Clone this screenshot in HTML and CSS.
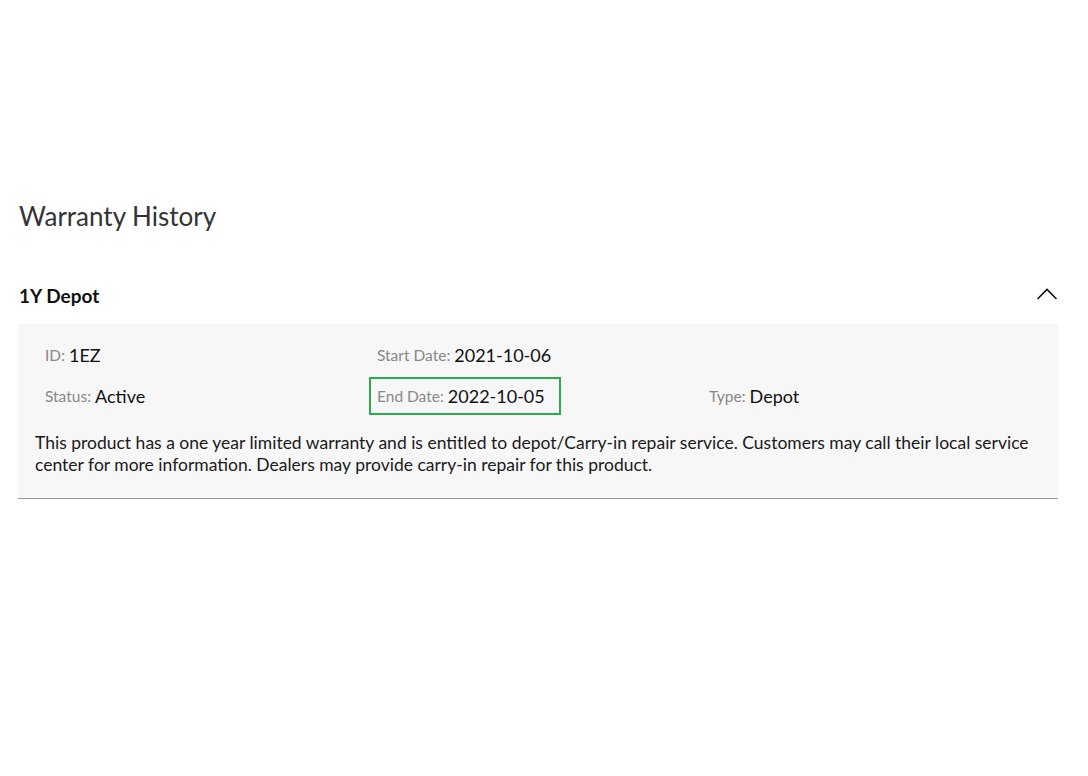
FILE: index.html
```html
<html>
	<head>
		<meta http-equiv="Content-Type" content="text/html; charset=utf-8">
		<title>
			Warranty History
		</title>
		<link rel="stylesheet" href="styles.css">
	</head>
	<body>
		<div class="container">
			<h1>Warranty History</h1>

			<div class="warranty_item">
				<div class="warranty_header">
					<h2>1Y Depot</h2>
					<svg class="chevron" width="22" height="14" viewBox="0 0 22 14">
						<polyline points="1.5,12 11,2.5 20.5,12" fill="none" stroke="#111" stroke-width="1.6"/>
					</svg>
				</div>

				<div class="warranty_body">
					<div class="field_grid">
						<div class="field"><span class="label">ID:</span> <span class="value">1EZ</span></div>
						<div class="field"><span class="label">Start Date:</span> <span class="value">2021-10-06</span></div>
						<div class="field">&nbsp;</div>

						<div class="field"><span class="label">Status:</span> <span class="value">Active</span></div>
						<div class="field highlight"><span class="label">End Date:</span> <span class="value">2022-10-05</span></div>
						<div class="field"><span class="label">Type:</span> <span class="value">Depot</span></div>
					</div>

					<p class="description">
						This product has a one year limited warranty and is entitled to depot/Carry-in repair service. Customers may call their local service center for more information. Dealers may provide carry-in repair for this product.
					</p>
				</div>
			</div>
		</div>
	</body>
</html>
```

FILE: styles.css
```css
*{
	margin:0;
	padding:0;
}

body{
	font-family:Lato, "Open Sans", sans-serif;
	background:#FFF;
	color:#111;
}

.container{
	padding:199px 30px 0 18px;
}

h1{
	font-size:26px;
	font-weight:normal;
	color:#333;
	line-height:34px;
	padding-left:1px;
}

.warranty_item{
	margin-top:35px;
}

.warranty_header{
	display:flex;
	align-items:center;
	justify-content:space-between;
	height:56px;
	padding:0 0 2px 1px;
	box-sizing:border-box;
}

h2{
	font-size:19px;
	font-weight:bold;
	color:#111;
}

.chevron{
	margin-top:-2px;
}

.warranty_body{
	background-color:#F7F7F7;
	border-bottom:1px solid #999;
	padding:12px 17px 22px 17px;
}

.field_grid{
	display:grid;
	grid-template-columns:332px 332px 332px;
	grid-auto-rows:38px;
	row-gap:3px;
}

.field{
	display:flex;
	align-items:center;
	padding:0 10px;
	white-space:nowrap;
}

.field .label{
	font-size:15.5px;
	color:#888;
}

.field .label + .value{
	margin-left:4px;
}

.field .value{
	font-size:18px;
	color:#111;
}

.highlight{
	border:2px solid #2EAA4F;
	margin-left:2px;
	padding-left:6px;
	width:192px;
	box-sizing:border-box;
}

.description{
	font-size:17.5px;
	line-height:22px;
	color:#1A1A1A;
	margin-top:17px;
}
```
